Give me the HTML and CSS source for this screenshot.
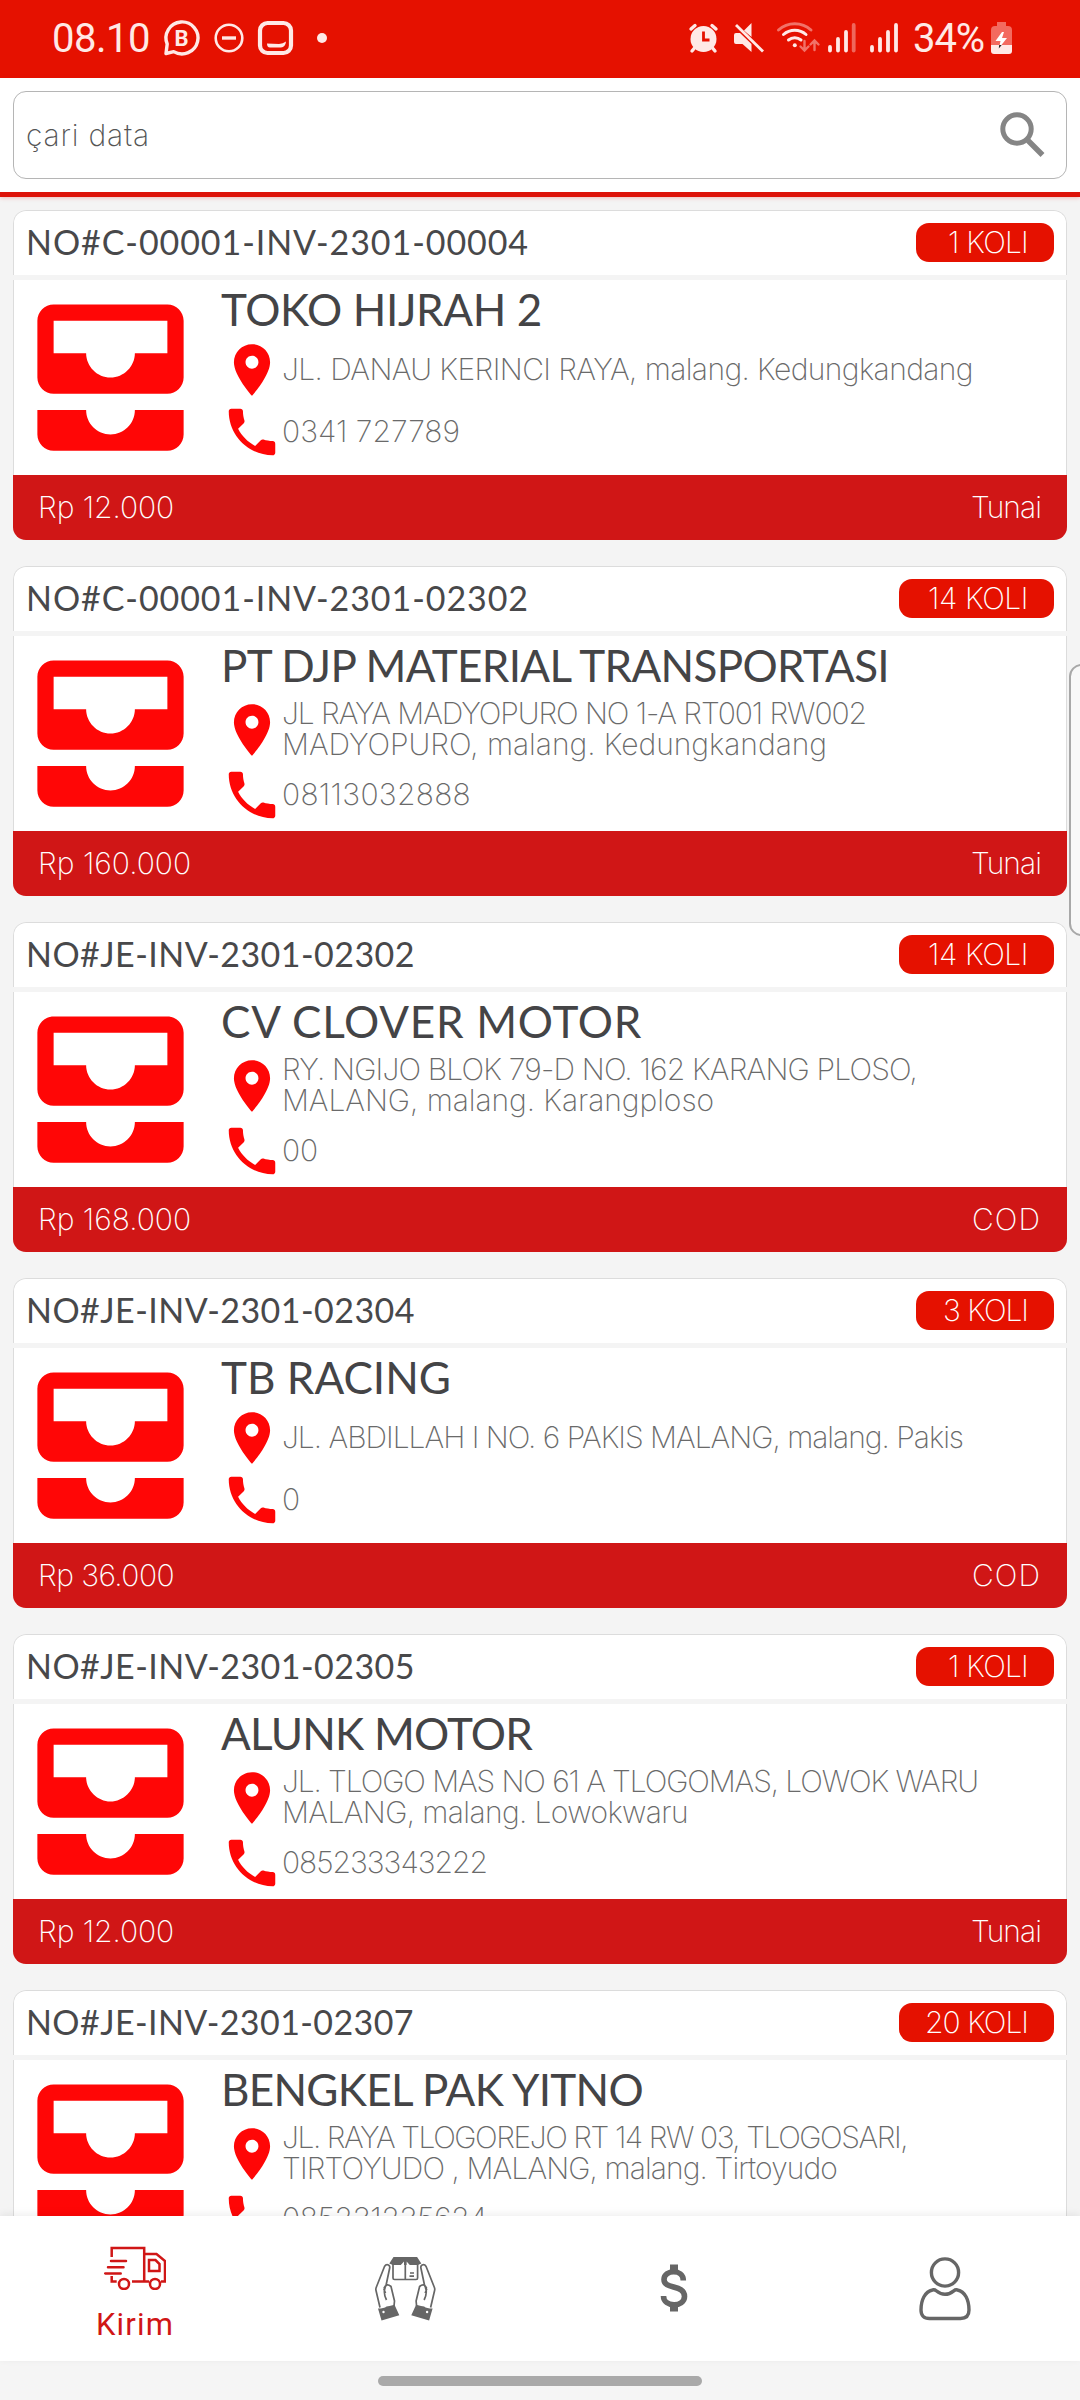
FILE: index.html
```html
<!DOCTYPE html>
<html lang="id">
<head>
    <meta charset="UTF-8">
    <meta name="viewport" content="width=device-width, initial-scale=1.0">
    <title>Kirim</title>
    <link rel="stylesheet" href="styles.css">
</head>
<body>

<div class="status-bar">
    <span class="clock" data-width="98">08.10</span>
    <svg class="status-left" width="166" height="40" viewBox="162 18 166 40">
        <g fill="none" stroke="#ffe9e6">
            <path stroke-width="3.4" stroke-linejoin="round" d="M166 53.500l1.200-9.500a16 16 0 1 1 6.500 7.600z"/>
            <circle cx="229" cy="38" r="13.300" stroke-width="2.600"/>
            <path stroke-width="3.400" d="M222 38h14"/>
            <rect x="260" y="23" width="31" height="30" rx="7.500" stroke-width="4.200"/>
        </g>
        <text class="wa-letter" x="174.600" y="46">B</text>
        <path fill="#ffe9e6" d="M267 43.500l12 .5q4-.2 7-2.500q-.5 5.500-5 6h-11q-3 0-3-4z"/>
        <circle cx="322" cy="38" r="5" fill="#ffe9e6"/>
    </svg>
    <svg class="status-right" width="216" height="40" viewBox="688 18 216 40">
        <g fill="#ffe9e6">
            <circle cx="703.500" cy="39" r="13"/>
            <path stroke="#ffe9e6" stroke-width="3.400" stroke-linecap="round" d="M691 29l4-3.500M716 29l-4-3.500M694.500 48l-2.500 3M712.500 48l2.500 3"/>
            <path d="M734 35q0-2 2-2h4l11.500 11v8l-9-8h-6.500q-2 0-2-2zM744 30.500l7.500-7.500v14z"/>
            <path stroke="#ffe9e6" stroke-width="2.800" d="M736 25l27 26.500"/>
        </g>
        <path fill="none" stroke="#e51100" stroke-width="2.800" d="M703.500 31.500v8.500h6"/>
        <g fill="none" stroke="#ffe9e6" stroke-width="3" stroke-linecap="round">
            <path opacity=".45" d="M778.500 30a24 24 0 0 1 32.500 0"/>
            <path d="M783.500 34.500a17 17 0 0 1 22.500 0M788.500 40a10 10 0 0 1 12.500 0"/>
            <path opacity=".45" stroke-width="2.400" d="M804.500 41v9m-4-3.500l4 4l4-4M814.500 50v-9m-4 3.500l4-4l4 4"/>
        </g>
        <circle cx="794.800" cy="45.300" r="2" fill="#ffe9e6"/>
        <g stroke="#ffe9e6" stroke-width="3.800" stroke-linecap="round">
            <path d="M830 47v3.500M838 39v11.500M846 32v18.500M872 47v3.500M880 39v11.500M888 32v18.500M896 25v25.500"/>
            <path opacity=".4" d="M853.700 25v25.500"/>
        </g>
    </svg>
    <span class="percent" data-width="71">34%</span>
    <svg class="battery" width="21" height="33" viewBox="0 0 21 33">
        <path fill="#f36a5f" d="M6 0h9v4h2q4 0 4 4v16H0V8q0-4 4-4h2z"/>
        <path fill="#ffe9e6" d="M0 23h21v6q0 3-3 3H3q-3 0-3-3z"/>
        <path fill="#fff" d="M11 10L4.500 19h5l-1.500 7l8-10h-5l2-6z"/>
        <path fill="#222" d="M8.200 23h2.500l-2.900 3.600z"/>
    </svg>
</div>

<div class="search">
    <div class="search-box">
        <span class="thin" data-width="124">çari data</span>
        <svg width="46" height="48" viewBox="0 0 46 48" fill="none" stroke="#858585">
            <circle cx="18" cy="18" r="14.200" stroke-width="5"/>
            <path stroke-width="5.500" d="M29 29.500l14.500 14.500"/>
        </svg>
    </div>
</div>

<div class="list" id="list"></div>

<div class="edge-panel"></div>

<div class="bottom-nav">
    <div class="nav-item active">
        <svg width="62" height="44" viewBox="0 0 62 44" fill="none" stroke="#d01616" stroke-width="2.500">
            <path d="M7.700 11V2h32.500v33.500M7.700 30v5.500h5M28 35.500h17M40 8h12.500l8.500 7v20.500h-4M45 14h6.500l4 4v7H45z"/>
            <path stroke-linecap="round" d="M7 15h15M4 21.200h15.500M1.200 27.400h15.500"/>
            <circle cx="20" cy="38" r="5"/>
            <circle cx="51" cy="38" r="5"/>
        </svg>
        <span class="nav-label" data-width="78">Kirim</span>
    </div>
    <div class="nav-item">
        <svg width="61" height="64" viewBox="0 0 61 64" fill="none" stroke="#666" stroke-width="1.700">
            <path fill="#666" stroke="none" d="M18.500 0h23.600l4.200 6.500-3.500 1.500h-8l-3.200-3.500V8h-2.600V4.500L25.800 8h-8l-3.500-1.500z"/>
            <path d="M18 7v14q0 1.500 1.500 1.500h21.600q1.500 0 1.500-1.500V7M30.300 4v18M35 16h4M34.500 19.200h4.500"/>
            <g id="hand">
                <path stroke-linejoin="round" d="M5 50.500L1 33.500q-.4-1.500.2-3L9.500 9.500q1.500-2.500 4-1.500q1.700 1 1.200 3l-3.700 17.500-2 4 1.500 3.500M9 31q2.500-5.500 7-1.500l3.500 14.500-.5 5M11.500 43q-3.500-7-1.300-12.500"/>
                <path fill="#666" stroke="none" d="M3 51.500q6 0 8.500-2l3-.5 5-1.200 4.800 10.500L6.500 63.500z"/>
                <circle cx="8.500" cy="55" r="1.200" fill="#fff" stroke="none"/>
            </g>
            <use href="#hand" transform="translate(60.600 0) scale(-1 1)"/>
        </svg>
    </div>
    <div class="nav-item dollar">
        <svg width="28" height="48" viewBox="0 0 28 48" fill="none" stroke="#666">
            <path stroke-width="5.600" d="M23.300 16.500C23.300 4.500 4 5.500 4 15.500C4 26 24.500 20 24.500 32.500C24.500 43.500 3.500 43.500 3.500 32"/>
            <path stroke-width="8" d="M14 .500v7M14 40.500v7"/>
        </svg>
    </div>
    <div class="nav-item">
        <svg width="52" height="64" viewBox="0 0 52 64" fill="none" stroke="#666" stroke-width="3.400">
            <circle cx="26" cy="15.500" r="13.600"/>
            <path stroke-linejoin="round" d="M13.500 33q2-.6 3.700.8q8.800 7 17.600 0q1.700-1.400 3.700-.8C46 34.500 50 43 50 53q0 8.500-8.500 8.500h-31Q2 61.500 2 53C2 43 6 34.500 13.500 33z"/>
        </svg>
    </div>
</div>

<div class="gesture-bar"><div class="gesture-handle"></div></div>

<script>
    // second value is the text width in px, used to fit the letter spacing
    const invoices = [
        { no: ['NO#C-00001-INV-2301-00004', 503], koli: ['1 KOLI', 80], name: ['TOKO HIJRAH 2', 321],
          address: [['JL. DANAU KERINCI RAYA, malang. Kedungkandang', 691]], phone: ['0341 727789', 178], price: ['Rp 12.000', 136], pay: ['Tunai', 70] },
        { no: ['NO#C-00001-INV-2301-02302', 503], koli: ['14 KOLI', 100], name: ['PT DJP MATERIAL TRANSPORTASI', 668],
          address: [['JL RAYA MADYOPURO NO 1-A RT001 RW002', 584], ['MADYOPURO, malang. Kedungkandang', 545]], phone: ['08113032888', 189], price: ['Rp 160.000', 153], pay: ['Tunai', 70] },
        { no: ['NO#JE-INV-2301-02302', 389], koli: ['14 KOLI', 100], name: ['CV CLOVER MOTOR', 421],
          address: [['RY. NGIJO BLOK 79-D NO. 162 KARANG PLOSO,', 635], ['MALANG, malang. Karangploso', 432]], phone: ['00', 36], price: ['Rp 168.000', 153], pay: ['COD', 69] },
        { no: ['NO#JE-INV-2301-02304', 389], koli: ['3 KOLI', 85], name: ['TB RACING', 230],
          address: [['JL. ABDILLAH I NO. 6 PAKIS MALANG, malang. Pakis', 681]], phone: ['0', 17], price: ['Rp 36.000', 136], pay: ['COD', 69] },
        { no: ['NO#JE-INV-2301-02305', 389], koli: ['1 KOLI', 80], name: ['ALUNK MOTOR', 311],
          address: [['JL. TLOGO MAS NO 61 A TLOGOMAS, LOWOK WARU', 696], ['MALANG, malang. Lowokwaru', 406]], phone: ['085233343222', 205], price: ['Rp 12.000', 136], pay: ['Tunai', 70] },
        { no: ['NO#JE-INV-2301-02307', 388], koli: ['20 KOLI', 103], name: ['BENGKEL PAK YITNO', 422],
          address: [['JL. RAYA TLOGOREJO RT 14 RW 03, TLOGOSARI,', 625], ['TIRTOYUDO , MALANG, malang. Tirtoyudo', 555]], phone: ['085231235624', 205], price: ['Rp 24.000', 136], pay: ['Tunai', 70] }
    ];

    const text = (cls, [value, width]) => `<span class="${cls}" data-width="${width}">${value}</span>`;

    document.getElementById('list').innerHTML = invoices.map(item => `
        <div class="card">
            <div class="card-header">
                ${text('invoice-no', item.no)}
                <div class="badge ${item.koli[0].length > 6 ? 'wide' : ''}">${text('thin', item.koli)}</div>
            </div>
            <div class="card-body">
                <svg class="inbox-icon" viewBox="0 0 24 24"><path d="M19 3H5c-1.100 0-2 .9-2 2v7c0 1.100.9 2 2 2h14c1.100 0 2-.9 2-2V5c0-1.100-.9-2-2-2zm0 6h-4c0 1.620-1.380 3-3 3s-3-1.380-3-3H5V5h14v4zm-4 7h6v3c0 1.100-.9 2-2 2H5c-1.100 0-2-.9-2-2v-3h6c0 1.660 1.340 3 3 3s3-1.340 3-3z"/></svg>
                <div class="details">
                    ${text('name', item.name)}
                    <div class="row ${item.address.length > 1 ? 'two-lines' : ''}">
                        <svg class="row-icon" viewBox="0 0 24 24"><path d="M12 2C8.130 2 5 5.130 5 9c0 5.250 7 13 7 13s7-7.750 7-13c0-3.870-3.130-7-7-7zm0 9.500c-1.380 0-2.500-1.120-2.500-2.500s1.120-2.500 2.500-2.500 2.500 1.120 2.500 2.500-1.120 2.500-2.500 2.500z"/></svg>
                        <div class="lines">${item.address.map(line => text('thin', line)).join('')}</div>
                    </div>
                    <div class="row">
                        <svg class="row-icon" viewBox="0 0 24 24"><path d="M6.620 10.790c1.440 2.830 3.760 5.140 6.590 6.590l2.200-2.200c.27-.27.67-.36 1.020-.24 1.120.37 2.330.57 3.570.57.55 0 1 .45 1 1V20c0 .55-.45 1-1 1-9.390 0-17-7.610-17-17 0-.55.45-1 1-1h3.500c.55 0 1 .45 1 1 0 1.250.2 2.450.57 3.570.11.35.03.74-.25 1.020l-2.200 2.200z"/></svg>
                        <div class="lines">${text('thin', item.phone)}</div>
                    </div>
                </div>
            </div>
            <div class="card-footer">
                ${text('thin', item.price)}
                ${text('thin', item.pay)}
            </div>
        </div>
    `).join('');

    document.querySelectorAll('[data-width]').forEach(el => {
        const gap = (el.dataset.width - el.getBoundingClientRect().width) / el.textContent.length;
        el.style.letterSpacing = gap.toFixed(3) + 'px';
    });
</script>

</body>
</html>
```
FILE: styles.css
```css
* {
    box-sizing: border-box;
}

body {
    margin: 0;
    width: 1080px;
    height: 2400px;
    display: flex;
    flex-direction: column;
    overflow: hidden;
    position: relative;
    background-color: #f4f4f4;
    font-family: Lato, "Liberation Sans", sans-serif;
}

span {
    white-space: pre;
}

.status-bar {
    height: 78px;
    flex: none;
    display: flex;
    align-items: center;
    padding: 0 68px 2px 52px;
    background-color: #e51100;
    color: #ffe9e6;
    font: 40px Roboto, sans-serif;
}

.status-left {
    margin-left: 12px;
}

.wa-letter {
    font: 700 22px Roboto, sans-serif;
    fill: #ffe9e6;
}

.status-right {
    margin-left: auto;
}

.percent {
    margin: 0 7px 0 9px;
}

.search {
    height: 119px;
    flex: none;
    padding: 13px 13px 0;
    background-color: #fff;
    border-bottom: 5px solid #dd1208;
    box-shadow: 0 1px 4px rgba(229, 17, 0, 0.25);
}

.search-box {
    height: 88px;
    display: flex;
    justify-content: space-between;
    align-items: center;
    padding: 0 21px 0 12px;
    border: 1px solid #b5b5b5;
    border-radius: 13px;
    color: #555;
}

.thin {
    font: 200 30px/31px Inter, sans-serif;
}

.list {
    flex: 1;
    min-height: 0;
    overflow: hidden;
    padding: 13px 13px 0;
}

.card {
    height: 330px;
    margin-bottom: 26px;
    border-radius: 13px;
    overflow: hidden;
    display: flex;
    flex-direction: column;
    gap: 5px;
}

.card-header {
    height: 65px;
    flex: none;
    display: flex;
    justify-content: space-between;
    align-items: center;
    padding: 0 12px 2px;
    background-color: #fff;
    border: 1px solid #dcdcdc;
    border-bottom: none;
    border-radius: 13px 13px 0 0;
}

.invoice-no {
    font-size: 34px;
    line-height: 40px;
    color: #48484a;
}

.badge {
    width: 138px;
    height: 39px;
    display: flex;
    justify-content: flex-end;
    align-items: center;
    padding-right: 26px;
    border-radius: 13px;
    background-color: #e51100;
    color: #fff;
}

.badge.wide {
    width: 155px;
}

.card-body {
    height: 195px;
    flex: none;
    display: flex;
    background-color: #fff;
    border: solid #dcdcdc;
    border-width: 0 1px;
}

.inbox-icon {
    width: 195px;
    height: 195px;
    margin-left: -1px;
    fill: #ff0606;
}

.details {
    display: flex;
    flex-direction: column;
    align-items: flex-start;
    padding-left: 13px;
}

.name {
    height: 59px;
    font-size: 44px;
    line-height: 59px;
    color: #444446;
}

.row {
    height: 62px;
    display: flex;
    align-items: center;
    color: #6a6a6a;
}

.row.two-lines {
    height: 69px;
}

.row-icon {
    width: 62px;
    height: 62px;
    fill: #ff0606;
}

.lines {
    display: flex;
    flex-direction: column;
    align-items: flex-start;
    margin-left: -1px;
    padding-bottom: 1px;
}

.card-footer {
    height: 65px;
    flex: none;
    display: flex;
    justify-content: space-between;
    align-items: center;
    margin-top: -5px;
    padding: 0 26px 0 25px;
    background-color: #d01616;
    color: #fff;
}

.edge-panel {
    position: absolute;
    right: -14px;
    top: 664px;
    width: 25px;
    height: 272px;
    background-color: #f8f8f8;
    border: 2px solid #a8a8a8;
    border-radius: 13px;
}

.bottom-nav {
    height: 145px;
    flex: none;
    display: grid;
    grid-template-columns: repeat(4, 1fr);
    background-color: #fff;
    box-shadow: 0 -2px 8px rgba(0, 0, 0, 0.07);
    position: relative;
}

.nav-item {
    display: flex;
    flex-direction: column;
    align-items: center;
    justify-content: center;
}

.nav-item.active {
    justify-content: flex-start;
    padding-top: 30px;
}

.nav-item.dollar {
    padding: 0 3px 2px 0;
}

.nav-label {
    margin-top: 16px;
    font: 31px/38px Roboto, sans-serif;
    color: #d01616;
}

.gesture-bar {
    height: 39px;
    flex: none;
    padding-top: 15px;
    background-color: #f5f5f5;
}

.gesture-handle {
    width: 324px;
    height: 10px;
    margin: 0 auto;
    border-radius: 5px;
    background-color: #a9a9a9;
}
```
